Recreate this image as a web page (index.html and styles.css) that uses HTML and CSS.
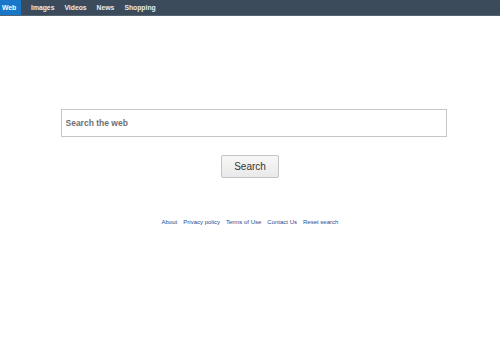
FILE: index.html
```html
<!DOCTYPE html>
<html lang="en">

<head>
    <meta charset="UTF-8">
    <meta name="viewport" content="width=device-width, initial-scale=1.0">
    <title>Search</title>
    <link rel="stylesheet" href="styles.css">
</head>

<body>
    <!-- 顶部导航 -->
    <div class="topbar">
        <a href="#" class="tab active">Web</a>
        <a href="#" class="tab">Images</a>
        <a href="#" class="tab">Videos</a>
        <a href="#" class="tab">News</a>
        <a href="#" class="tab">Shopping</a>
    </div>

    <div class="main">
        <input type="text" class="query" placeholder="Search the web">
        <button class="go">Search</button>
        <div class="links">
            <a href="#">About</a>
            <a href="#">Privacy policy</a>
            <a href="#">Terms of Use</a>
            <a href="#">Contact Us</a>
            <a href="#">Reset search</a>
        </div>
    </div>
</body>

</html>
```

FILE: styles.css
```css
* {
    margin: 0;
    padding: 0;
    box-sizing: border-box;
}

body {
    font-family: "Liberation Sans", Arial, sans-serif;
    background: #fff;
}

.topbar {
    display: flex;
    height: 16px;
    background-color: #3b4b5b;
    border-bottom: 1px solid #56646f;
}

.tab {
    display: block;
    height: 15px;
    line-height: 15px;
    padding: 0 5px;
    font-size: 6.8px;
    font-weight: bold;
    color: #e8ecef;
    text-decoration: none;
}

.tab.active {
    width: 21px;
    background-color: #1877c9;
    padding: 0 0 0 2px;
    margin-right: 5px;
    color: #fff;
}

.main {
    display: flex;
    flex-direction: column;
    align-items: center;
    padding-top: 93px;
}

.query {
    width: 386px;
    height: 28px;
    margin-left: 7px;
    border: 1px solid #c6c6c6;
    padding: 0 4px;
    font-family: "Liberation Sans", Arial, sans-serif;
    font-size: 8.5px;
    outline: none;
}

.query::placeholder {
    color: #707070;
    font-weight: bold;
}

.go {
    width: 58px;
    height: 23px;
    margin-top: 18px;
    border: 1px solid #c4c4c4;
    border-radius: 2px;
    background: linear-gradient(#f7f7f7, #e9e9e9);
    font-family: "Liberation Sans", Arial, sans-serif;
    font-size: 10px;
    color: #333;
}

.links {
    display: flex;
    gap: 6px;
    margin-top: 41px;
}

.links a {
    font-size: 6px;
    color: #2b4a8c;
    text-decoration: none;
}

.links a:hover {
    text-decoration: underline;
}
```
